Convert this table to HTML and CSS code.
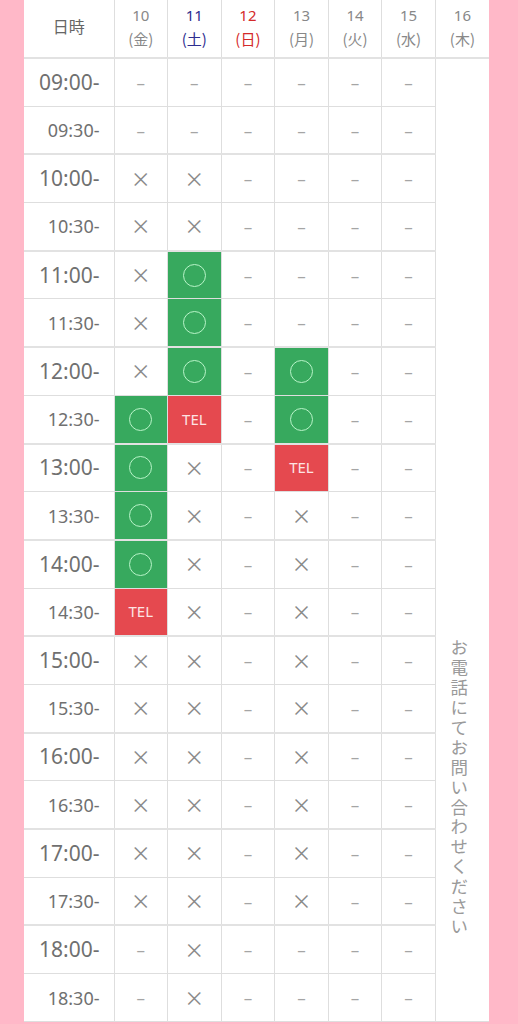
FILE: index.html
```html
<!DOCTYPE html>
<html lang="ja">
<head>
<meta charset="utf-8">
<title>予約状況</title>
<link rel="stylesheet" href="styles.css">
</head>
<body>
<div class="wrap">
<table class="schedule">
<colgroup><col class="c-time"><col><col><col><col><col><col><col></colgroup>
<thead>
<tr>
<th class="h-time">日時</th>
<th class="day"><span class="d">10</span><span class="w">(金)</span></th>
<th class="day sat"><span class="d">11</span><span class="w">(土)</span></th>
<th class="day sun"><span class="d">12</span><span class="w">(日)</span></th>
<th class="day"><span class="d">13</span><span class="w">(月)</span></th>
<th class="day"><span class="d">14</span><span class="w">(火)</span></th>
<th class="day"><span class="d">15</span><span class="w">(水)</span></th>
<th class="day"><span class="d">16</span><span class="w">(木)</span></th>
</tr>
</thead>
<tbody>
<tr class="hour"><th class="time">09:00-</th><td class="na">–</td><td class="na">–</td><td class="na">–</td><td class="na">–</td><td class="na">–</td><td class="na">–</td><td class="note" rowspan="20"><span class="vtext">お電話にてお問い合わせください</span></td></tr>
<tr class="half"><th class="time">09:30-</th><td class="na">–</td><td class="na">–</td><td class="na">–</td><td class="na">–</td><td class="na">–</td><td class="na">–</td></tr>
<tr class="hour"><th class="time">10:00-</th><td class="x">×</td><td class="x">×</td><td class="na">–</td><td class="na">–</td><td class="na">–</td><td class="na">–</td></tr>
<tr class="half"><th class="time">10:30-</th><td class="x">×</td><td class="x">×</td><td class="na">–</td><td class="na">–</td><td class="na">–</td><td class="na">–</td></tr>
<tr class="hour"><th class="time">11:00-</th><td class="x">×</td><td class="ok"><span class="maru"></span></td><td class="na">–</td><td class="na">–</td><td class="na">–</td><td class="na">–</td></tr>
<tr class="half"><th class="time">11:30-</th><td class="x">×</td><td class="ok"><span class="maru"></span></td><td class="na">–</td><td class="na">–</td><td class="na">–</td><td class="na">–</td></tr>
<tr class="hour"><th class="time">12:00-</th><td class="x">×</td><td class="ok"><span class="maru"></span></td><td class="na">–</td><td class="ok"><span class="maru"></span></td><td class="na">–</td><td class="na">–</td></tr>
<tr class="half"><th class="time">12:30-</th><td class="ok"><span class="maru"></span></td><td class="tel">TEL</td><td class="na">–</td><td class="ok"><span class="maru"></span></td><td class="na">–</td><td class="na">–</td></tr>
<tr class="hour"><th class="time">13:00-</th><td class="ok"><span class="maru"></span></td><td class="x">×</td><td class="na">–</td><td class="tel">TEL</td><td class="na">–</td><td class="na">–</td></tr>
<tr class="half"><th class="time">13:30-</th><td class="ok"><span class="maru"></span></td><td class="x">×</td><td class="na">–</td><td class="x">×</td><td class="na">–</td><td class="na">–</td></tr>
<tr class="hour"><th class="time">14:00-</th><td class="ok"><span class="maru"></span></td><td class="x">×</td><td class="na">–</td><td class="x">×</td><td class="na">–</td><td class="na">–</td></tr>
<tr class="half"><th class="time">14:30-</th><td class="tel">TEL</td><td class="x">×</td><td class="na">–</td><td class="x">×</td><td class="na">–</td><td class="na">–</td></tr>
<tr class="hour"><th class="time">15:00-</th><td class="x">×</td><td class="x">×</td><td class="na">–</td><td class="x">×</td><td class="na">–</td><td class="na">–</td></tr>
<tr class="half"><th class="time">15:30-</th><td class="x">×</td><td class="x">×</td><td class="na">–</td><td class="x">×</td><td class="na">–</td><td class="na">–</td></tr>
<tr class="hour"><th class="time">16:00-</th><td class="x">×</td><td class="x">×</td><td class="na">–</td><td class="x">×</td><td class="na">–</td><td class="na">–</td></tr>
<tr class="half"><th class="time">16:30-</th><td class="x">×</td><td class="x">×</td><td class="na">–</td><td class="x">×</td><td class="na">–</td><td class="na">–</td></tr>
<tr class="hour"><th class="time">17:00-</th><td class="x">×</td><td class="x">×</td><td class="na">–</td><td class="x">×</td><td class="na">–</td><td class="na">–</td></tr>
<tr class="half"><th class="time">17:30-</th><td class="x">×</td><td class="x">×</td><td class="na">–</td><td class="x">×</td><td class="na">–</td><td class="na">–</td></tr>
<tr class="hour"><th class="time">18:00-</th><td class="na">–</td><td class="x">×</td><td class="na">–</td><td class="na">–</td><td class="na">–</td><td class="na">–</td></tr>
<tr class="half"><th class="time">18:30-</th><td class="na">–</td><td class="x">×</td><td class="na">–</td><td class="na">–</td><td class="na">–</td><td class="na">–</td></tr>
</tbody>
</table>
</div>
</body>
</html>
```

FILE: styles.css
```css
html, body {
  margin: 0;
  padding: 0;
}
body {
  background: #ffb8c8;
  font-family: "Noto Sans", "Noto Sans CJK JP", sans-serif;
  color: #777;
}
.wrap {
  padding: 0 29px 0 24px;
}
.schedule {
  width: 465px;
  border-collapse: collapse;
  table-layout: fixed;
  background: #fff;
}
.c-time {
  width: 90px;
}
.schedule th,
.schedule td {
  border: 1px solid #dedede;
  padding: 0;
  text-align: center;
  vertical-align: middle;
  font-weight: normal;
  line-height: 1;
}
.schedule tr > :first-child {
  border-left: none;
}
.schedule thead th:last-child,
.schedule .note {
  border-right: none;
}
.schedule thead th {
  border-top: none;
  padding-bottom: 4px;
}
.schedule thead tr {
  height: 58px;
}
.h-time {
  font-size: 16px;
  color: #666;
}
.day {
  font-size: 15px;
  color: #888;
}
.day .d,
.day .w {
  display: block;
  line-height: 23px;
}
.day .w {
  font-family: "Noto Sans CJK JP", sans-serif;
}
.day.sat {
  color: #2d2d8f;
}
.day.sun {
  color: #d42a2a;
}
.schedule tbody tr {
  height: 48.2px;
}
.schedule tr.hour > * {
  border-top: 2px solid #e2e2e2;
}
.time {
  text-align: right !important;
  padding-right: 14px !important;
  font-size: 21px;
  color: #707070;
}
.half .time {
  font-size: 18px;
}
.na {
  font-size: 17px;
  color: #a5a5a5;
}
.x {
  font-family: "Noto Sans CJK JP", sans-serif;
  font-size: 20px;
  color: #8a8a8a;
}
.ok {
  background: #37a95e;
}
.maru {
  display: inline-block;
  width: 21px;
  height: 21px;
  border: 1.5px solid #b8f4c8;
  border-radius: 50%;
  vertical-align: middle;
}
.tel {
  background: #e5494f;
  color: #fde3e3;
  font-size: 15px;
}
.note {
  vertical-align: top !important;
  padding-top: 580px !important;
  padding-right: 7px !important;
}
.vtext {
  display: inline-block;
  writing-mode: vertical-rl;
  font-family: "Noto Sans CJK JP", sans-serif;
  font-size: 17.5px;
  letter-spacing: 2.4px;
  line-height: 1;
  color: #9a9a9a;
}
```
